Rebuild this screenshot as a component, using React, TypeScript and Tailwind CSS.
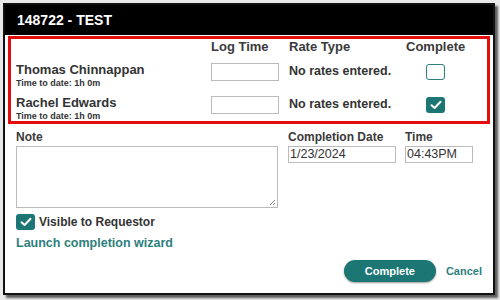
import React from "react";

function Check({ checked }: { checked: boolean }) {
  return checked ? (
    <div className="w-[19px] h-[16px] rounded-[3px] bg-[#1c7674] flex items-center justify-center shrink-0">
      <svg width="12" height="10" viewBox="0 0 12 10" fill="none">
        <path d="M1.5 5.2 L4.6 8 L10.5 1.8" stroke="white" strokeWidth="2" strokeLinecap="round" strokeLinejoin="round" />
      </svg>
    </div>
  ) : (
    <div className="w-[19px] h-[16px] rounded-[3px] border border-[#2a7f7d] bg-white shrink-0" />
  );
}

function Row({ name, checked }: { name: string; checked: boolean }) {
  return (
    <div className="flex items-start h-[33px]">
      <div className="w-[195px] flex flex-col mt-[9px]">
        <span className="text-[13px] leading-[12px] font-bold text-[#333]">{name}</span>
        <span className="text-[9px] leading-[10px] font-bold text-[#333] mt-[2px]">Time to date: 1h 0m</span>
      </div>
      <div className="w-[68px] h-[18px] mt-[8px] border border-[#bbb] bg-white shrink-0" />
      <div className="w-[10px] shrink-0" />
      <div className="w-[137px] mt-[9px] text-[12.5px] leading-[14px] font-bold text-[#333] shrink-0">No rates entered.</div>
      <div className="mt-[9px]">
        <Check checked={checked} />
      </div>
    </div>
  );
}

export default function App() {
  return (
    <div
      className="w-[500px] h-[300px] bg-[#e9e9e9] relative overflow-hidden"
      style={{ fontFamily: '"Liberation Sans", Arial, sans-serif' }}
    >
      <div className="absolute left-[3px] top-[3px] w-[492px] h-[292px] bg-white border-2 border-[#111] shadow-[3px_3px_2px_rgba(0,0,0,0.6)] flex flex-col">
        <div className="h-[30px] bg-black flex items-center pl-[12px] shrink-0">
          <span className="text-white font-bold text-[14px]">148722 - TEST</span>
        </div>
        <div className="mx-[3px] mt-[1px] h-[88px] border-[3px] border-[#e40d0d] flex flex-col pl-[5px] text-[#333]">
          <div className="flex h-[16px] items-center text-[13px] font-bold text-[#3a3a3a]">
            <div className="w-[195px]" />
            <div className="w-[78px]">Log Time</div>
            <div className="w-[117px]">Rate Type</div>
            <div className="w-[59px] text-center">Complete</div>
          </div>
          <Row name="Thomas Chinnappan" checked={false} />
          <Row name="Rachel Edwards" checked={true} />
        </div>
        <div className="flex pl-[11px] mt-[6px]">
          <div className="w-[262px] flex flex-col">
            <div className="text-[12px] font-bold text-[#3a3a3a] leading-[14px]">Note</div>
            <div className="mt-[2px] h-[62px] border border-[#bbb] bg-white relative">
              <svg className="absolute right-[1px] bottom-[1px]" width="7" height="7" viewBox="0 0 7 7">
                <path d="M6 1 L1 6 M6 4 L4 6" stroke="#888" strokeWidth="1" />
              </svg>
            </div>
            <div className="flex items-center mt-[5px] gap-[4px]">
              <Check checked={true} />
              <span className="text-[12px] font-bold text-[#333]">Visible to Requestor</span>
            </div>
            <div className="mt-[5px] text-[12.5px] leading-[14px] font-bold text-[#2e807d]">Launch completion wizard</div>
          </div>
          <div className="w-[10px] shrink-0" />
          <div className="flex flex-col w-[108px] shrink-0">
            <div className="text-[12px] font-bold text-[#3a3a3a] leading-[14px]">Completion Date</div>
            <div className="mt-[2px] h-[17px] border border-[#bbb] bg-white text-[12.5px] text-[#333] pl-[1px] flex items-center">1/23/2024</div>
          </div>
          <div className="w-[9px] shrink-0" />
          <div className="flex flex-col w-[68px] shrink-0">
            <div className="text-[12px] font-bold text-[#3a3a3a] leading-[14px]">Time</div>
            <div className="mt-[2px] h-[17px] border border-[#bbb] bg-white text-[12.5px] text-[#333] pl-[1px] flex items-center">04:43PM</div>
          </div>
        </div>
        <div className="flex-1" />
        <div className="flex items-center justify-end pr-[11px] pb-[11px] gap-[10px]">
          <div className="w-[92px] h-[22px] rounded-full bg-[#1c7674] flex items-center justify-center text-white text-[11px] font-bold shadow-[0_1px_2px_rgba(0,0,0,0.4)]">Complete</div>
          <span className="text-[11px] font-bold text-[#2e807d]">Cancel</span>
        </div>
      </div>
    </div>
  );
}
